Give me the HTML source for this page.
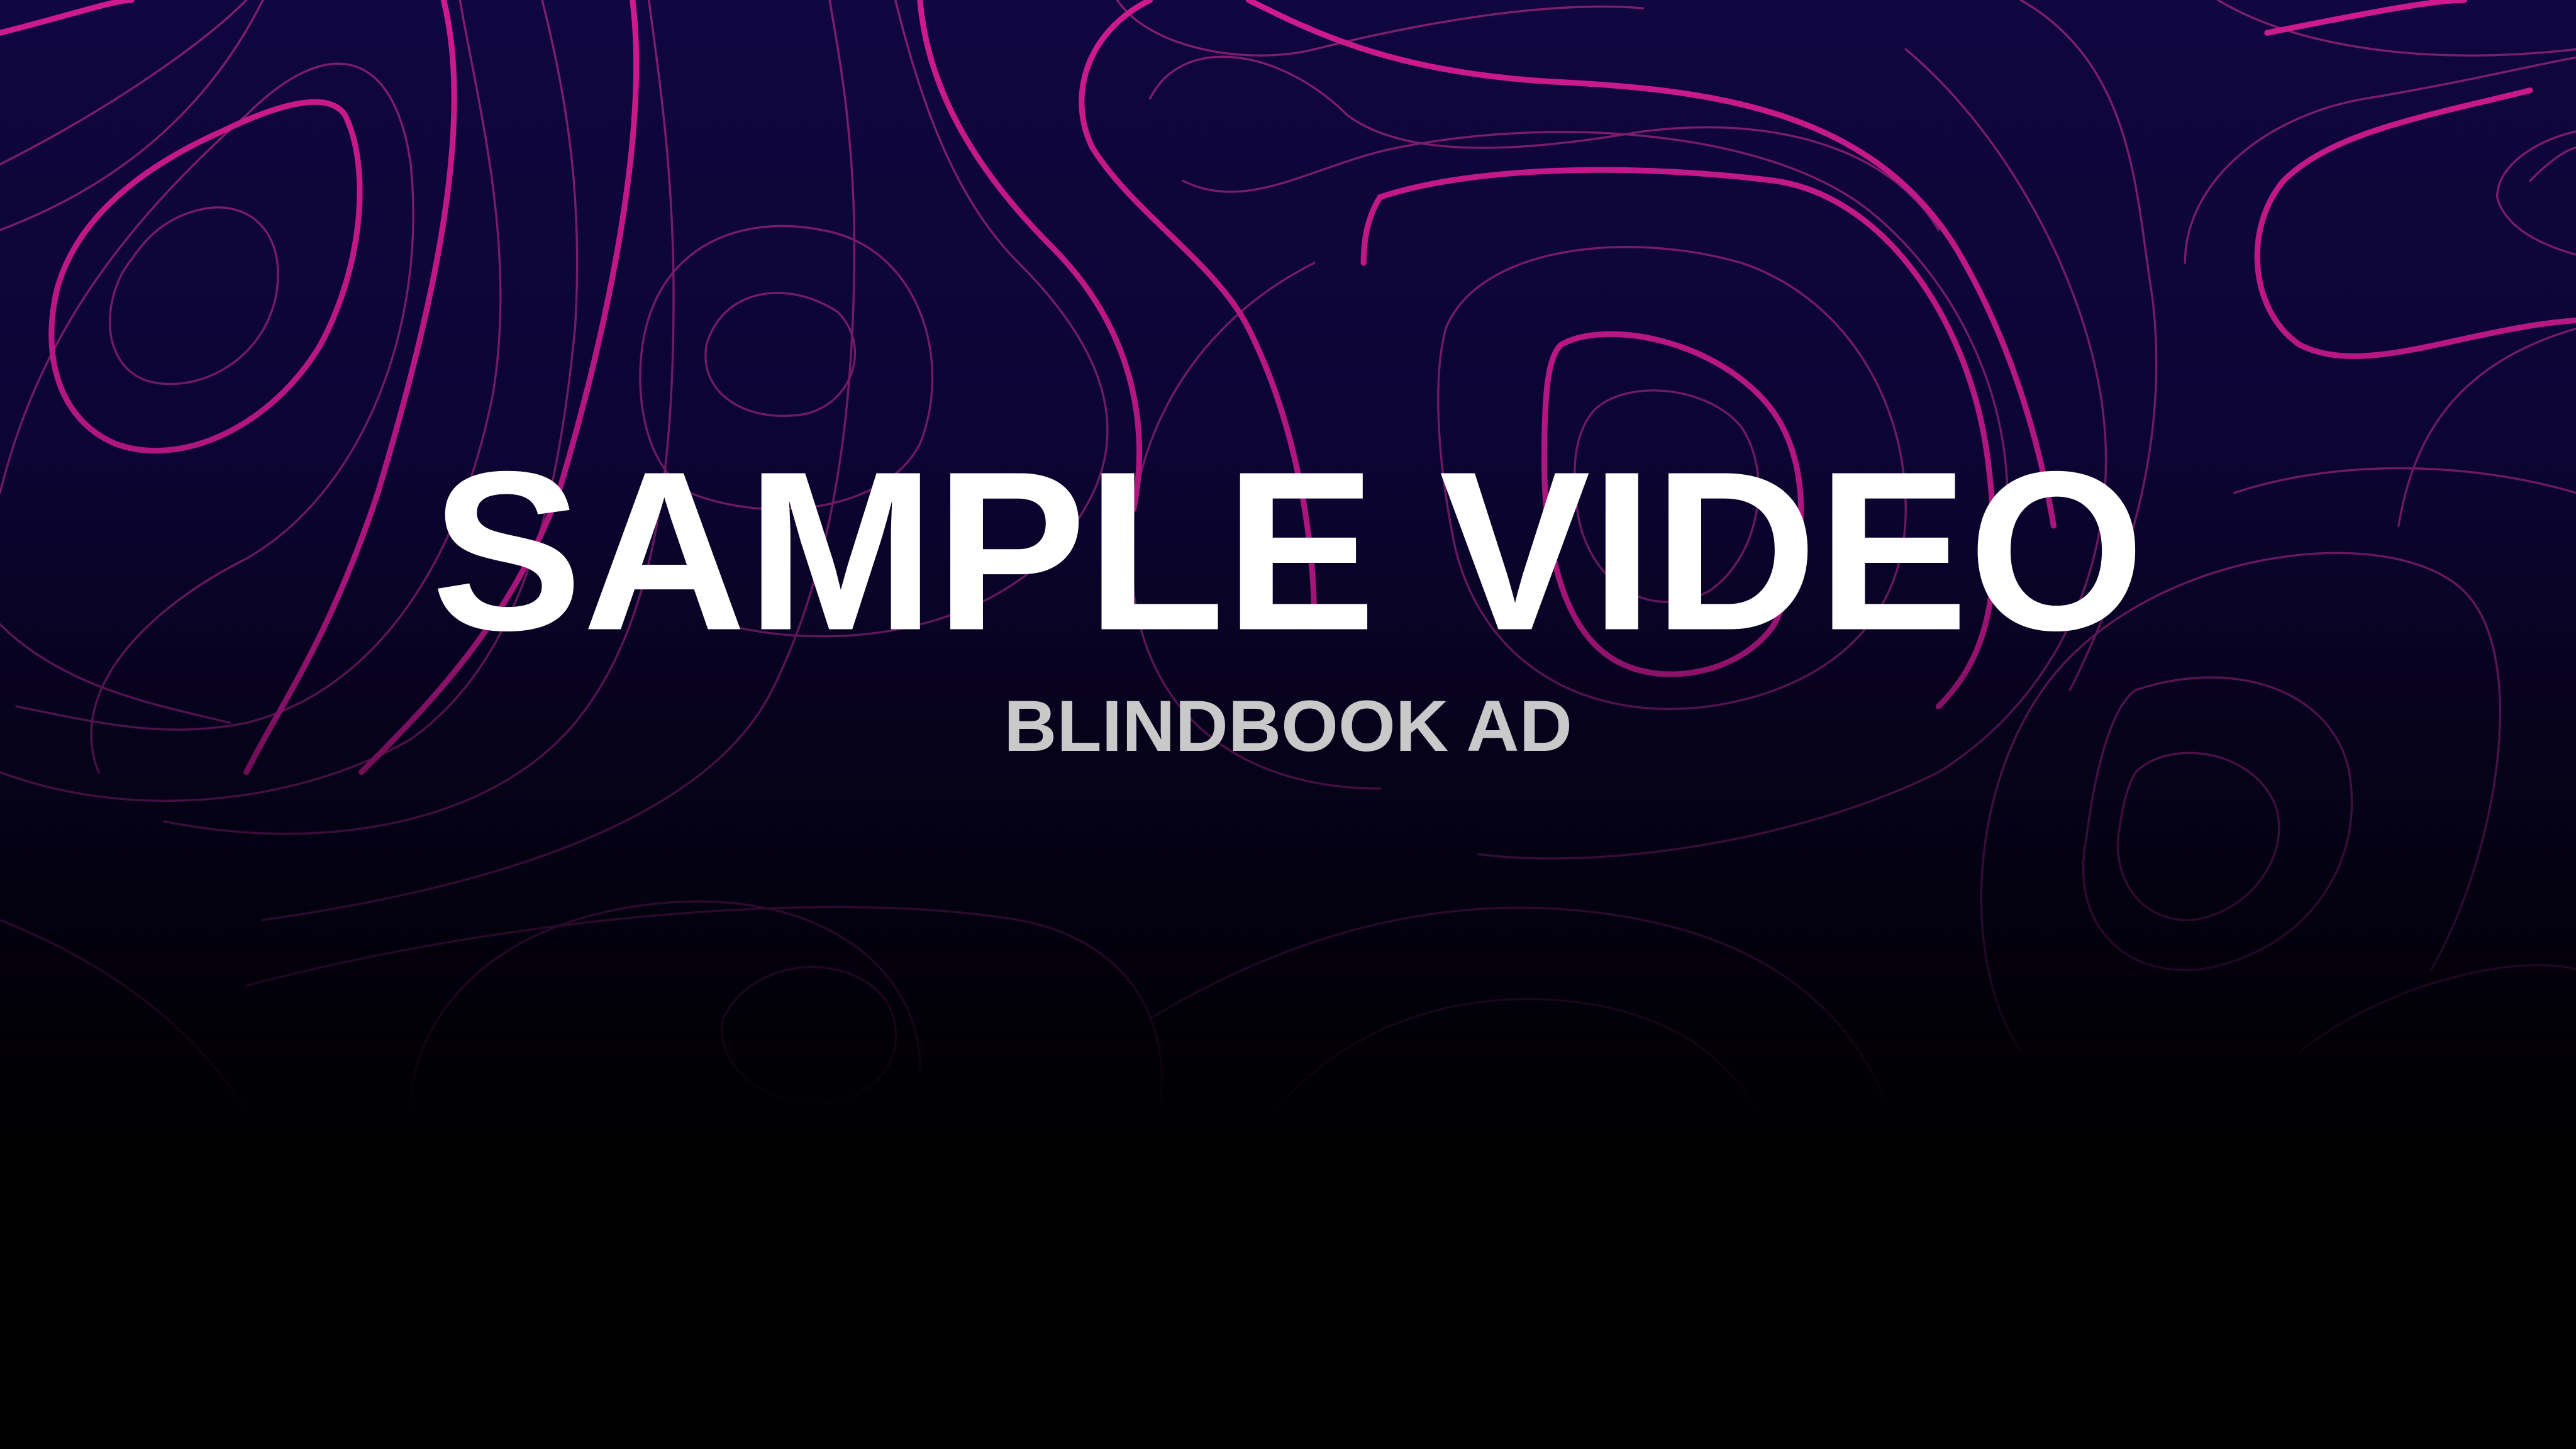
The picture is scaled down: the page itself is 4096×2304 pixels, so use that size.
<!DOCTYPE html>
<html><head><meta charset="utf-8"><style>
html,body{margin:0;padding:0;width:4096px;height:2304px;overflow:hidden;background:#000}
svg{display:block}
</style></head><body>
<svg width="4096" height="2304" viewBox="0 0 1568 882" xmlns="http://www.w3.org/2000/svg">
<defs>
<linearGradient id="bg" x1="0" y1="0" x2="0" y2="1">
<stop offset="0" stop-color="#100640"/>
<stop offset="0.3" stop-color="#0c0434"/>
<stop offset="0.5" stop-color="#07021c"/>
<stop offset="0.7" stop-color="#020008"/>
<stop offset="0.8" stop-color="#000"/>
<stop offset="1" stop-color="#000"/>
</linearGradient>
<linearGradient id="fade" x1="0" y1="0" x2="0" y2="1">
<stop offset="0" stop-color="#fff" stop-opacity="1"/>
<stop offset="0.4" stop-color="#fff" stop-opacity="0.8"/>
<stop offset="0.62" stop-color="#fff" stop-opacity="0.35"/>
<stop offset="0.78" stop-color="#fff" stop-opacity="0"/>
</linearGradient>
<mask id="m"><rect width="1568" height="882" fill="url(#fade)"/></mask>
</defs>
<rect width="1568" height="882" fill="url(#bg)"/>
<g mask="url(#m)" fill="none" stroke-linecap="round">
<g stroke="#8e2274" stroke-width="1.3" opacity="0.9">
<!-- left loops -->
<path d="M120,128 C150,120 175,140 168,180 C160,220 120,240 90,232 C60,222 62,180 80,158 C92,140 105,132 120,128Z"/>
<path d="M0,100 C60,70 120,30 150,0"/>
<path d="M0,140 C80,110 130,60 160,0"/>
<path d="M0,300 C20,220 60,150 150,70 C200,20 240,30 250,100 C260,200 220,300 150,340 C90,370 40,420 60,470"/>
<path d="M10,430 C60,440 100,450 150,440 C230,420 280,340 300,240 C315,150 290,60 280,0"/>
<path d="M0,470 C80,500 180,490 250,450 C320,400 340,300 350,200 C355,120 345,60 330,0"/>
<path d="M100,500 C200,520 300,500 350,440 C400,380 410,280 410,180 C410,100 400,40 395,0"/>
<path d="M160,560 C300,540 430,500 470,420 C510,340 520,240 520,150 C520,80 510,30 505,0"/>
<path d="M430,210 C440,175 480,170 510,190 C530,210 520,245 490,252 C455,258 425,240 430,210Z"/>
<path d="M390,220 C395,150 450,130 500,140 C560,150 580,220 560,270 C540,310 470,320 420,300 C395,285 388,250 390,220Z"/>
<path d="M545,0 C560,60 580,120 620,160 C670,210 690,260 660,310 C620,380 520,400 440,380"/>
<!-- middle top -->
<path d="M700,60 C720,20 780,30 820,70 C860,100 940,90 1000,80 C1080,70 1150,90 1180,140"/>
<path d="M680,0 C700,30 760,40 800,30 C860,15 940,0 1000,5"/>
<path d="M720,110 C760,130 800,100 850,90 C950,70 1080,80 1140,130 C1200,180 1230,260 1220,330"/>
<path d="M880,200 C900,150 990,140 1060,160 C1120,180 1160,240 1160,310 C1160,380 1110,420 1040,430 C960,440 900,400 885,330 C875,280 872,230 880,200Z"/>
<path d="M970,250 C990,230 1040,235 1060,260 C1080,290 1070,340 1040,360 C1000,380 965,350 960,310 C956,280 960,262 970,250Z"/>
<path d="M840,480 C760,480 700,440 690,360 C680,280 720,200 800,160"/>
<path d="M900,520 C980,530 1100,510 1180,470 C1260,420 1290,330 1280,250 C1270,170 1220,80 1160,30"/>
<path d="M1230,0 C1300,40 1300,120 1310,180 C1320,260 1300,340 1260,420"/>
<!-- right -->
<path d="M1540,110 C1560,90 1568,90 1568,90"/>
<path d="M1520,120 C1520,100 1545,85 1568,80 M1520,120 C1525,140 1550,150 1568,155"/>
<path d="M1350,0 C1400,30 1480,40 1568,30"/>
<path d="M1330,160 C1330,110 1380,70 1440,60 C1500,50 1540,40 1568,35"/>
<path d="M1300,420 C1360,400 1420,420 1430,470 C1440,530 1400,580 1340,590 C1290,595 1260,560 1270,510 C1275,470 1285,430 1300,420Z"/>
<path d="M1300,470 C1320,450 1370,455 1385,490 C1395,520 1370,555 1335,560 C1300,562 1285,530 1290,505 C1292,490 1295,478 1300,470Z"/>
<path d="M1230,640 C1190,580 1200,460 1260,400 C1330,330 1460,320 1500,360 C1540,400 1520,520 1480,590"/>
<path d="M1568,300 C1500,280 1420,280 1360,300"/>
<!-- lower -->
<path d="M150,600 C300,560 500,540 620,560 C700,575 720,640 700,700"/>
<path d="M0,560 C100,600 150,660 170,720"/>
<path d="M250,700 C240,620 300,560 400,550 C500,540 560,590 560,650"/>
<path d="M440,620 C460,580 520,580 540,610 C560,650 520,680 480,670 C455,662 436,645 440,620Z"/>
<path d="M700,620 C800,560 900,540 1000,560 C1100,580 1150,640 1160,720"/>
<path d="M760,700 C800,630 880,600 960,610 C1040,620 1080,670 1080,720"/>
<path d="M0,380 C40,420 100,430 140,440"/>
<path d="M1568,200 C1500,220 1470,260 1460,320"/>
<path d="M1400,640 C1450,600 1530,580 1568,590"/>
</g>
<g stroke="#cf1a8e" stroke-width="3.5">
<path d="M0,20 C40,10 70,0 80,0"/>
<path d="M210,70 C225,100 222,160 195,210 C165,260 110,285 70,270 C35,255 25,215 35,175 C48,130 90,100 135,80 C170,63 200,55 210,70Z"/>
<path d="M270,0 C290,80 260,200 230,300 C200,390 170,430 150,470"/>
<path d="M385,0 C395,80 370,200 340,300 C310,380 260,430 220,470"/>
<path d="M560,0 C565,60 600,110 640,150 C690,200 700,260 690,310"/>
<path d="M700,0 C660,20 650,60 665,90 C690,130 740,160 760,200 C790,260 800,330 800,380"/>
<path d="M760,0 C800,20 850,45 950,50 C1050,55 1140,70 1190,150 C1220,200 1240,260 1250,320"/>
<path d="M840,120 C900,100 1000,100 1080,110 C1150,120 1200,200 1210,280 C1220,360 1210,400 1180,430"/>
<path d="M830,160 C830,140 835,128 840,120"/>
<path d="M950,210 C975,195 1040,205 1075,245 C1105,280 1100,340 1080,380 C1060,410 1010,420 980,400 C950,380 940,330 940,280 C940,240 942,218 950,210Z"/>
<path d="M1540,55 C1480,70 1420,80 1390,110 C1365,140 1370,190 1400,210 C1440,230 1500,200 1568,195"/>
<path d="M1380,20 C1430,10 1480,0 1500,0"/>
</g>
</g>
<text x="784" y="383" text-anchor="middle" font-family="Liberation Sans, sans-serif" font-weight="bold" font-size="138" fill="#fff" textLength="1043" lengthAdjust="spacingAndGlyphs">SAMPLE VIDEO</text>
<text x="784" y="457" text-anchor="middle" font-family="Liberation Sans, sans-serif" font-weight="bold" font-size="44" fill="#c9c9c9" textLength="346" lengthAdjust="spacingAndGlyphs">BLINDBOOK AD</text>
</svg>
</body></html>
